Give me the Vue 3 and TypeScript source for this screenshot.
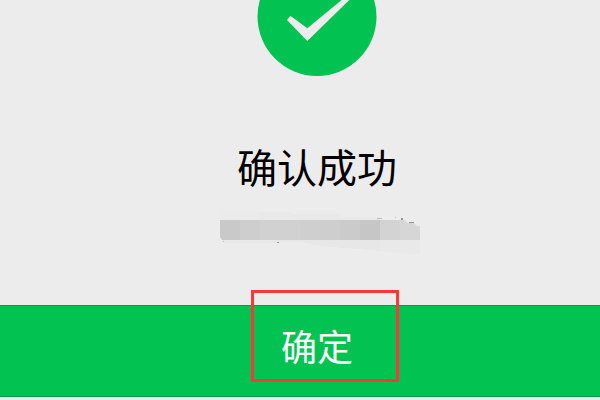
<script setup lang="ts">
interface Tile {
  x: number
  color: string
}

const title = '确认成功'
const action = '确定'

const tiles: Tile[] = [
  { x: 6, color: '#c9c9c9' },
  { x: 26, color: '#cecece' },
  { x: 46, color: '#d1d1d1' },
  { x: 66, color: '#d1d1d1' },
  { x: 86, color: '#cfcfcf' },
  { x: 106, color: '#cecece' },
  { x: 126, color: '#cbcbcb' },
  { x: 146, color: '#c6c6c6' },
  { x: 166, color: '#d3d3d3' },
  { x: 186, color: '#d6d6d6' },
]
</script>

<template>
  <main class="page">
    <section class="result">
      <svg class="badge" viewBox="0 0 120 76" aria-hidden="true">
        <circle cx="60" cy="16.5" r="59.5" fill="#02c351" />
        <path d="M30 20 L33.3 15.7 L50.3 28.3 L84.7 0 H92.3 L50.3 41 Z" fill="#ececec" />
      </svg>
      <h1 class="title">{{ title }}</h1>
      <svg class="mosaic" viewBox="0 0 206 44" shape-rendering="crispEdges" aria-hidden="true">
        <path d="M6 0 H78 V2 H126 V5 H166 V8 H6 Z" fill="#e9e9e9" />
        <path d="M6 0 H46 V8 H6 Z" fill="#ebebeb" />
        <path d="M8 28 H206 V42 H196 L166 39 L146 37 L116 35 L96 32 L86 30 L34 31 H10 Z" fill="#e7e7e7" />
        <path d="M166 28 H206 V42 H196 L166 39 Z" fill="#e9e9e9" />
        <clipPath id="strip">
          <path d="M6 8 H190 L194 11 H200 L203 14 H206 V28 H8 L6 25 Z" />
        </clipPath>
        <g clip-path="url(#strip)">
          <rect v-for="tile in tiles" :key="tile.x" :x="tile.x" y="8" width="20" height="20" :fill="tile.color" />
        </g>
        <path d="M163 6 H168 V7 H163 Z M181 5 H182 V6 H181 Z M9 29 H10 V30 H9 Z" fill="#bdbdbd" />
        <path d="M187 6 H189 V8 H187 Z M195 10 H200 V11 H195 Z M63 30 H65 V31 H63 Z" fill="#949494" />
      </svg>
    </section>
    <button class="confirm" type="button">
      <span class="label">{{ action }}<span class="marker"></span></span>
    </button>
  </main>
</template>

<style>
body {
  margin: 0;
  background: #ececec;
}
</style>

<style scoped>
.page {
  display: flex;
  flex-direction: column;
  padding-bottom: 3px;
  background: #ececec;
  font-family: "Noto Sans CJK SC", sans-serif;
}

.result {
  display: flex;
  flex-direction: column;
  align-items: center;
  padding: 0 0 49px 34px;
}

.badge {
  display: block;
  width: 120px;
  height: 76px;
}

.title {
  margin: 60px 0 16px;
  font-size: 40px;
  font-weight: 400;
  line-height: 60px;
  color: #000;
}

.mosaic {
  display: block;
  width: 206px;
  height: 44px;
}

.confirm {
  display: flex;
  align-items: center;
  justify-content: center;
  width: 100%;
  height: 92px;
  padding: 0 0 12px 34px;
  border: 0 solid #079e45;
  border-width: 1px 0;
  background: #02c351;
  color: #fff;
  font-family: inherit;
  font-size: 36px;
  line-height: 52px;
  cursor: pointer;
}

.label {
  position: relative;
}

.marker {
  position: absolute;
  top: -29px;
  left: -30px;
  box-sizing: border-box;
  width: 148px;
  height: 92px;
  border: 3px solid #fc3737;
  pointer-events: none;
}
</style>
